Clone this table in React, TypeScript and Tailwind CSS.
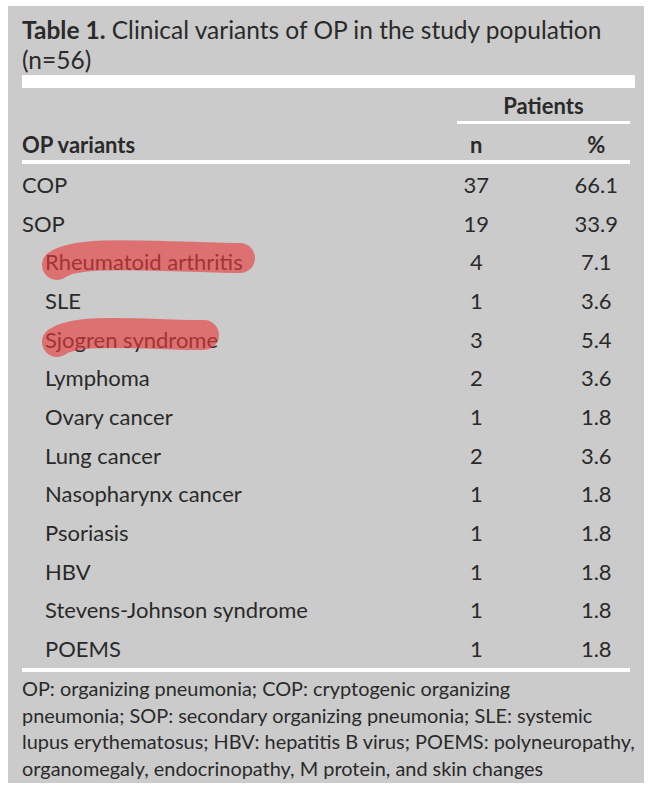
import React from "react";

const rows: { label: string; n: string; pct: string; indent?: boolean }[] = [
  { label: "COP", n: "37", pct: "66.1" },
  { label: "SOP", n: "19", pct: "33.9" },
  { label: "Rheumatoid arthritis", n: "4", pct: "7.1", indent: true },
  { label: "SLE", n: "1", pct: "3.6", indent: true },
  { label: "Sjogren syndrome", n: "3", pct: "5.4", indent: true },
  { label: "Lymphoma", n: "2", pct: "3.6", indent: true },
  { label: "Ovary cancer", n: "1", pct: "1.8", indent: true },
  { label: "Lung cancer", n: "2", pct: "3.6", indent: true },
  { label: "Nasopharynx cancer", n: "1", pct: "1.8", indent: true },
  { label: "Psoriasis", n: "1", pct: "1.8", indent: true },
  { label: "HBV", n: "1", pct: "1.8", indent: true },
  { label: "Stevens-Johnson syndrome", n: "1", pct: "1.8", indent: true },
  { label: "POEMS", n: "1", pct: "1.8", indent: true },
];

export default function App() {
  return (
    <div className="min-h-[800px] bg-white pt-[6px] pl-[8px] font-['Lato',sans-serif] text-[#2a2a2a]">
      <div className="relative w-[636px] bg-[#cbcbcb] px-[14px] pt-[9px] pb-[1px]">
        <div className="whitespace-nowrap text-[24.5px] leading-[30px]">
          <span className="font-bold">Table 1.</span> Clinical variants of OP in the study population
          <br />
          (n=56)
        </div>
        <div className="mt-[0px] h-[13px] w-[613px] bg-white" />
        {/* header */}
        <div className="flex h-[36px] items-end">
          <div className="w-[437px]" />
          <div className="flex h-[36px] w-[174px] items-center justify-center border-b-[3px] border-white pt-[2px] text-[22px] font-bold">
            Patients
          </div>
        </div>
        <div className="flex h-[40px] items-center border-b-[4px] border-white pt-[4px] text-[22px] font-bold">
          <div className="w-[428px]">OP variants</div>
          <div className="w-[60px] text-center">n</div>
          <div className="w-[57px]" />
          <div className="w-[68px] text-center">%</div>
        </div>
        <div className="border-b-[4px] border-white pt-[1px]">
          {rows.map((r) => (
            <div key={r.label} className="flex h-[38.7px] items-center text-[22px]">
              <div className={`w-[428px] ${r.indent ? "pl-[23px]" : ""}`}>{r.label}</div>
              <div className="w-[60px] text-center">{r.n}</div>
              <div className="w-[57px]" />
              <div className="w-[68px] text-center">{r.pct}</div>
            </div>
          ))}
        </div>
        <div className="whitespace-nowrap pt-[3px] text-[19.9px] leading-[26.7px]">
          OP: organizing pneumonia; COP: cryptogenic organizing
          <br />
          pneumonia; SOP: secondary organizing pneumonia; SLE: systemic
          <br />
          lupus erythematosus; HBV: hepatitis B virus; POEMS: polyneuropathy,
          <br />
          organomegaly, endocrinopathy, M protein, and skin changes
        </div>
        <svg
          className="pointer-events-none absolute left-0 top-0"
          width="636"
          height="780"
          viewBox="0 0 636 780"
        >
          <path
            d="M 49 259 C 70 243, 150 251, 232 252"
            fill="none"
            stroke="rgba(232,58,58,0.62)"
            strokeWidth="30"
            strokeLinecap="round"
          />
          <path
            d="M 49 336 C 70 321, 140 329, 196 329"
            fill="none"
            stroke="rgba(232,58,58,0.62)"
            strokeWidth="30"
            strokeLinecap="round"
          />
        </svg>
      </div>
    </div>
  );
}
